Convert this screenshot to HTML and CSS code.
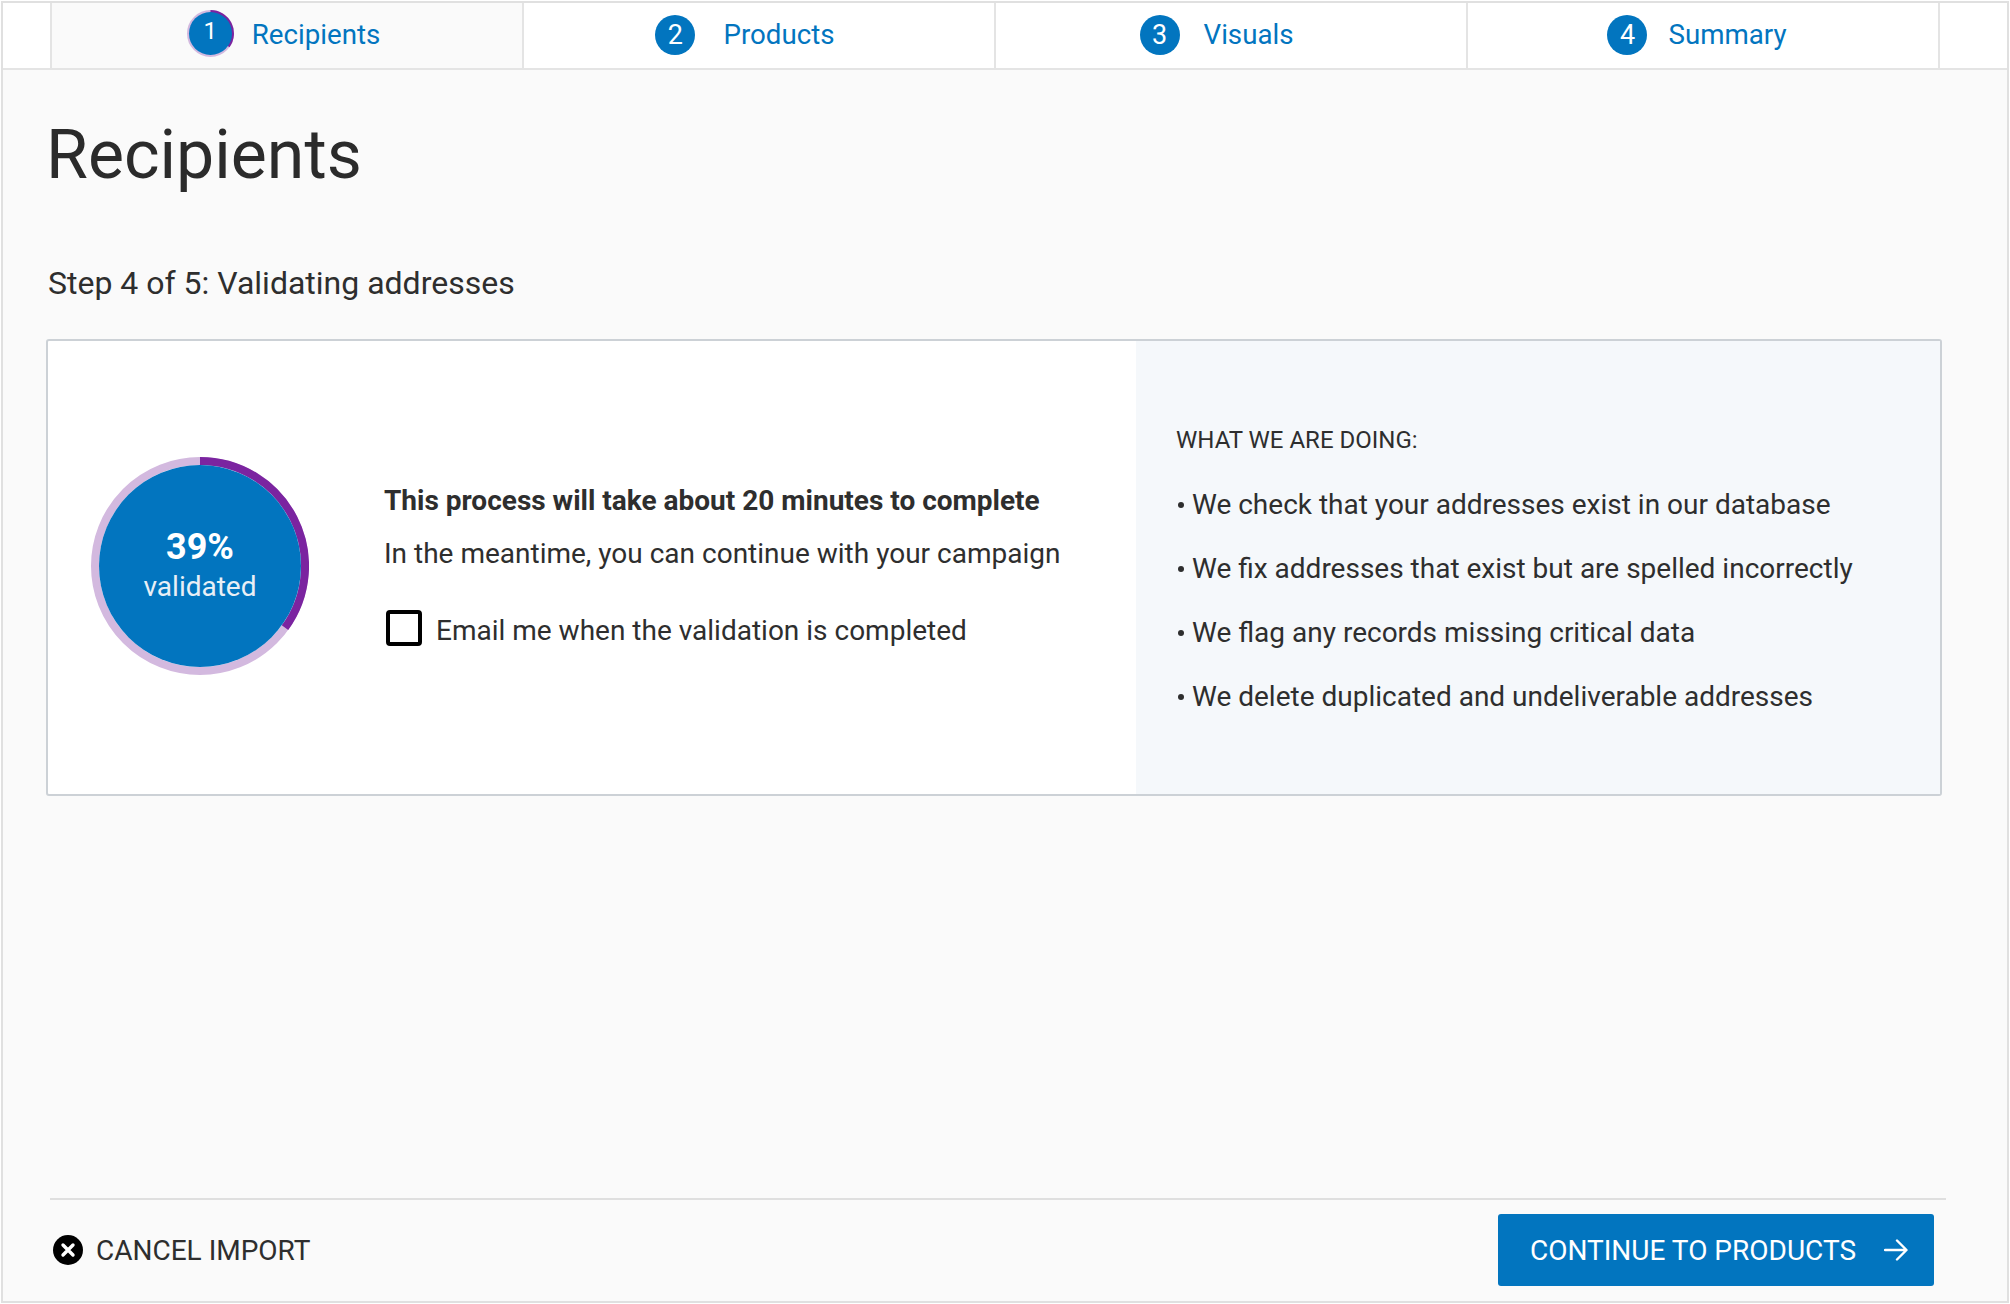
FILE: index.html
```html
<!DOCTYPE html>
<html lang="en">
<head>
<meta charset="utf-8">
<title>Recipients</title>
<link rel="stylesheet" href="styles.css">
</head>
<body>
<div class="frame">
  <nav class="tabs">
    <div class="tab-edge tab-edge-left"></div>
    <div class="tab tab-1 active">
      <span class="badge-ring">
        <svg class="ring" viewBox="0 0 48 48" aria-hidden="true"><circle cx="24" cy="24" r="22.5" fill="none" stroke="#d3b9df" stroke-width="3"/><path d="M24 1.5A22.5 22.5 0 0 1 42.200 37.200" fill="none" stroke="#7b24a0" stroke-width="3"/></svg>
        <span class="badge badge-inner">1</span>
      </span>
      <span class="tab-label">Recipients</span>
    </div>
    <div class="tab tab-2"><span class="badge">2</span><span class="tab-label">Products</span></div>
    <div class="tab tab-3"><span class="badge">3</span><span class="tab-label">Visuals</span></div>
    <div class="tab tab-4"><span class="badge">4</span><span class="tab-label">Summary</span></div>
    <div class="tab-edge"></div>
  </nav>
  <main class="main">
    <h1 class="title">Recipients</h1>
    <p class="step">Step 4 of 5: Validating addresses</p>
    <section class="card">
      <div class="card-left">
        <div class="donut">
          <svg class="donut-ring" viewBox="0 0 218 218" aria-hidden="true">
            <circle cx="109" cy="109" r="105" fill="none" stroke="#d3b9df" stroke-width="8"/>
            <path d="M109 4A105 105 0 0 1 194 170.700" fill="none" stroke="#7b24a0" stroke-width="8"/>
            <circle cx="109" cy="109" r="101" fill="#0275bf"/>
          </svg>
          <div class="donut-text">
            <strong class="pct">39%</strong>
            <span class="pct-label">validated</span>
          </div>
        </div>
        <div class="process">
          <p class="process-title">This process will take about 20 minutes to complete</p>
          <p class="process-sub">In the meantime, you can continue with your campaign</p>
          <label class="check"><span class="box"></span><span>Email me when the validation is completed</span></label>
        </div>
      </div>
      <aside class="card-right">
        <h2 class="doing">WHAT WE ARE DOING:</h2>
        <ul class="doing-list">
          <li>We check that your addresses exist in our database</li>
          <li>We fix addresses that exist but are spelled incorrectly</li>
          <li>We flag any records missing critical data</li>
          <li>We delete duplicated and undeliverable addresses</li>
        </ul>
      </aside>
    </section>
  </main>
  <footer class="footer">
    <a class="cancel">
      <svg class="cancel-icon" viewBox="0 0 30 30" aria-hidden="true"><circle cx="15" cy="15" r="15" fill="#000"/><path d="M10 10l10 10M20 10L10 20" stroke="#fff" stroke-width="3.400" stroke-linecap="round"/></svg>
      <span>CANCEL IMPORT</span>
    </a>
    <button class="continue">
      <span>CONTINUE TO PRODUCTS</span>
      <svg class="arrow" viewBox="0 0 24 24" aria-hidden="true"><path d="M1 12h21M13 2.500L22.500 12 13 21.500" fill="none" stroke="#fff" stroke-width="2.400" stroke-linecap="round" stroke-linejoin="round"/></svg>
    </button>
  </footer>
</div>
</body>
</html>
```
FILE: styles.css
```css
* { box-sizing: border-box; }
html, body { margin: 0; padding: 0; background: #fff; }
body { font-family: Roboto, "Liberation Sans", sans-serif; color: #2e2e2e; }
.frame {
  margin: 1px;
  width: 2008px;
  height: 1302px;
  border: 2px solid #e0e0e0;
  background: #fafafa;
  display: flex;
  flex-direction: column;
}
.tabs {
  display: flex;
  height: 67px;
  flex: none;
  background: #fff;
  border-bottom: 2px solid #e4e4e4;
}
.tab-edge { flex: 1 1 0; }
.tab-edge-left { flex: none; width: 47px; }
.tab {
  flex: none;
  width: 472px;
  display: flex;
  align-items: center;
  justify-content: center;
  padding-bottom: 2px;
  border-left: 2px solid #e4e4e4;
  font-size: 27.700px;
}
.tab-4 { border-right: 2px solid #e4e4e4; width: 474px; }
.active { background: #fafafa; }
.tab-1 { gap: 18px; padding-right: 7px; }
.tab-2 { gap: 28px; padding-right: 28px; }
.tab-3 { gap: 24px; padding-right: 29px; }
.tab-4 { gap: 21px; padding-right: 12px; }
.tab-label { color: #0275bf; }
.badge {
  width: 40px;
  height: 40px;
  border-radius: 50%;
  background: #0275bf;
  color: #fff;
  display: flex;
  align-items: center;
  justify-content: center;
  font-size: 27px;
  flex: none;
}
.badge-ring {
  position: relative;
  width: 47px;
  height: 47px;
  flex: none;
  margin-top: -2px;
}
.ring { position: absolute; inset: 0; width: 47px; height: 47px; }
.badge-inner { position: absolute; left: 2px; top: 2px; width: 43px; height: 43px; padding-bottom: 6px; font-size: 24px; }
.main { padding: 0 0 0 43px; }
.title {
  margin: 46px 0 0;
  font-size: 68px;
  line-height: 78px;
  font-weight: 400;
  color: #2b2b2b;
}
.step { margin: 69px 0 0 2px; font-size: 32px; line-height: 40px; }
.card {
  margin-top: 36px;
  width: 1896px;
  height: 457px;
  border: 2px solid #ccd1d6;
  border-radius: 3px;
  display: flex;
  background: #fff;
}
.card-left {
  width: 1088px;
  flex: none;
  display: flex;
  align-items: center;
  padding: 0 0 4px 43px;
}
.donut { position: relative; width: 218px; height: 218px; flex: none; }
.donut-ring { position: absolute; inset: 0; width: 218px; height: 218px; }
.donut-text {
  position: absolute;
  inset: 0;
  display: flex;
  flex-direction: column;
  align-items: center;
  justify-content: center;
  color: #fff;
}
.pct { font-size: 36px; line-height: 42px; font-weight: 700; }
.pct-label { margin-top: 1px; font-size: 28px; line-height: 36px; color: #e8eff6; }
.process { margin: 0 0 3px 75px; font-size: 28px; }
.process-title { margin: 0; font-weight: 700; line-height: 40px; font-size: 28px; }
.process-sub { margin: 13px 0 0; line-height: 40px; }
.check { display: flex; align-items: center; gap: 14px; margin-top: 40px; padding-left: 2px; }
.box {
  width: 36px;
  height: 36px;
  margin-top: -6px;
  border: 4px solid #000;
  border-radius: 4px;
  background: #fff;
  flex: none;
}
.card-right {
  flex: 1;
  background: #f5f8fb;
  padding: 16px 0 0 40px;
  display: flex;
  flex-direction: column;
  justify-content: center;
}
.doing { margin: 0 0 15px; font-size: 24px; line-height: 36px; font-weight: 400; }
.doing-list { list-style: none; margin: 0; padding: 0; font-size: 28px; }
.doing-list li { line-height: 64px; position: relative; padding-left: 16px; }
.doing-list li::before {
  content: "";
  position: absolute;
  left: 2px;
  top: 29px;
  width: 6px;
  height: 6px;
  border-radius: 50%;
  background: #2e2e2e;
}
.footer {
  margin: auto 61px 0 47px;
  border-top: 2px solid #dfdfdf;
  display: flex;
  justify-content: space-between;
  align-items: center;
  padding: 14px 12px 15px 3px;
}
.cancel { display: flex; align-items: center; gap: 13px; font-size: 28px; }
.cancel-icon { width: 30px; height: 30px; flex: none; }
.continue {
  width: 436px;
  height: 72px;
  padding: 0 0 0 6px;
  background: #0275bf;
  border: 0;
  border-radius: 3px;
  color: #fff;
  font: inherit;
  font-size: 28px;
  display: flex;
  align-items: center;
  justify-content: center;
  gap: 28px;
}
.arrow { width: 24px; height: 24px; flex: none; }
```
